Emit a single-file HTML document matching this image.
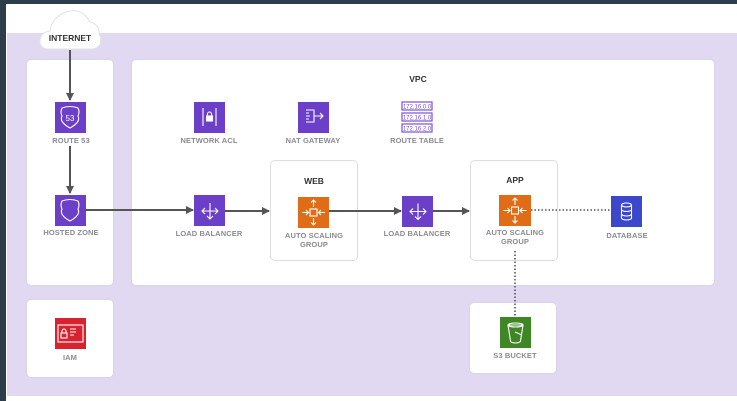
<!DOCTYPE html>
<html><head><meta charset="utf-8">
<style>
html,body{margin:0;padding:0;}
body{width:737px;height:401px;position:relative;overflow:hidden;background:#fff;font-family:"Liberation Sans",Arial,sans-serif;}
.abs{position:absolute;}
.panel{position:absolute;background:#fff;border-radius:4px;box-shadow:0 0 2px rgba(0,0,0,0.08);}
.lbl{position:absolute;font-size:7.5px;color:#8a8a92;font-weight:bold;text-align:center;width:120px;margin-left:-60px;letter-spacing:0.1px;line-height:9px;}
.ttl{position:absolute;font-size:8.5px;color:#333;font-weight:bold;text-align:center;width:80px;margin-left:-40px;}
</style></head><body>
<div class="abs" style="left:0;top:0;width:737px;height:4px;background:#2d3e4a"></div>
<div class="abs" style="left:0;top:0;width:6px;height:401px;background:#2d3e4a"></div>
<div class="abs" style="left:7px;top:33px;width:730px;height:363px;background:#e0d9f1"></div>
<div class="panel" style="left:27px;top:60px;width:86px;height:225px"></div>
<div class="panel" style="left:132px;top:60px;width:582px;height:225px"></div>
<div class="panel" style="left:27px;top:300px;width:86px;height:77px"></div>
<div class="panel" style="left:470px;top:303px;width:86px;height:70px"></div>
<div class="abs" style="left:270px;top:160px;width:86px;height:99px;border:1.5px solid #ddd;border-radius:5px;background:#fff"></div>
<div class="abs" style="left:470px;top:160px;width:86px;height:99px;border:1.5px solid #ddd;border-radius:5px;background:#fff"></div>

<svg class="abs" style="left:0;top:0" width="737" height="401" viewBox="0 0 737 401">
<defs><marker id="ah" markerWidth="8" markerHeight="8" refX="7" refY="4" orient="auto" markerUnits="userSpaceOnUse"><path d="M0,0 L8,4 L0,8z" fill="#555"/></marker></defs>
<path d="M49,49 Q39,49 40,40 Q41,32 50,31 Q52,17 66,12 Q82,7 90,22 Q100,25 99,34 Q102,38 100,44 Q98,49 90,49 Z" fill="#fff" stroke="#e3e3e3" stroke-width="1"/>
<g stroke="#555" stroke-width="2" fill="none">
<line x1="70" y1="50" x2="70" y2="100" marker-end="url(#ah)"/>
<line x1="70" y1="146" x2="70" y2="193" marker-end="url(#ah)"/>
<line x1="86" y1="210" x2="193" y2="210" marker-end="url(#ah)"/>
<line x1="225" y1="211" x2="269" y2="211" marker-end="url(#ah)"/>
<line x1="329" y1="211" x2="401" y2="211" marker-end="url(#ah)"/>
<line x1="432" y1="211" x2="469" y2="211" marker-end="url(#ah)"/>
</g>
<g stroke="#555" stroke-width="1.6" stroke-dasharray="1.5,2" fill="none">
<line x1="531" y1="210" x2="611" y2="210"/>
<line x1="515" y1="251" x2="515" y2="318"/>
</g>
<g fill="#6b3fc7">
<rect x="55" y="102" width="31" height="31"/>
<rect x="55" y="195" width="31" height="31"/>
<rect x="194" y="102" width="31" height="31"/>
<rect x="298" y="102" width="31" height="31"/>
<rect x="194" y="195" width="31" height="31"/>
<rect x="402" y="196" width="31" height="31"/>
</g>
<rect x="611" y="196" width="31" height="31" fill="#3b48cc"/>
<rect x="298" y="197" width="31" height="31" fill="#e06c17"/>
<rect x="499" y="195" width="32" height="31" fill="#e06c17"/>
<rect x="55" y="318" width="31" height="31" fill="#d6232f"/>
<rect x="500" y="317" width="31" height="31" fill="#3f8624"/>
<g stroke="#fff" stroke-width="1.1" fill="none">
<path d="M62,108 Q70,105 78,108 Q80,112 78,116 Q81,122 70,128 Q59,122 62,116 Q60,112 62,108Z"/>
<path d="M62,201 Q70,198 78,201 Q80,205 78,209 Q81,215 70,221 Q59,215 62,209 Q60,205 62,201Z"/>
<line x1="203" y1="108" x2="203" y2="126"/><line x1="216" y1="108" x2="216" y2="126"/>
<rect x="206.5" y="116" width="6" height="5" fill="#fff"/><path d="M207.5,116 v-2 a2,2 0 0 1 4,0 v2"/>
<path d="M306,110 h8 v12 h-8 M314,116 h9 M320,113 l3,3 -3,3 M306,116 h4 M306,113 h3 M306,119 h3"/>
<path d="M202,211 h16 M210,203 v16 M205,208 l-3,3 3,3 M215,208 l3,3 -3,3 M207,216 l3,3 3,-3"/>
<path d="M410,211.5 h16 M418,203.5 v16 M413,208.5 l-3,3 3,3 M423,208.5 l3,3 -3,3 M415,216.5 l3,3 3,-3"/>
<rect x="310" y="209" width="7" height="7"/><path d="M313.5,200 v7 M311,202.5 l2.5,-2.5 2.5,2.5 M313.5,218 v7 M311,222.5 l2.5,2.5 2.5,-2.5 M302,212.5 h6 M306,210 l2.5,2.5 -2.5,2.5 M325,212.5 h-6 M321,210 l-2.5,2.5 2.5,2.5"/>
<rect x="511.5" y="207" width="7" height="7"/><path d="M515,198 v7 M512.5,200.5 l2.5,-2.5 2.5,2.5 M515,216 v7 M512.5,220.5 l2.5,2.5 2.5,-2.5 M503.5,210.5 h6 M507.5,208 l2.5,2.5 -2.5,2.5 M526.5,210.5 h-6 M522.5,208 l-2.5,2.5 2.5,2.5"/>
<ellipse cx="626.5" cy="205" rx="5" ry="2"/><path d="M621.5,205 v13 a5,2 0 0 0 10,0 v-13 M621.5,209.5 a5,2 0 0 0 10,0 M621.5,214 a5,2 0 0 0 10,0"/>
<rect x="58" y="325" width="25" height="17"/><rect x="61" y="333" width="6" height="5"/><path d="M62,333 v-2 a2,2 0 0 1 4,0 v2 M70,329 h6 M70,332 h6 M70,335 h4"/>
<path d="M508,325 h15 l-2.5,16 a5,2 0 0 1 -10,0 Z"/><ellipse cx="515.5" cy="325" rx="7.5" ry="2"/><path d="M515,332 l7,3"/>
</g>
<g fill="#fff" stroke="#7c4fd6" stroke-width="1.2">
<rect x="402" y="102" width="30" height="8"/><rect x="402" y="113" width="30" height="8"/><rect x="402" y="124" width="30" height="8"/>
</g>
<g font-family="Liberation Sans,sans-serif" font-size="6" fill="#7c4fd6" text-anchor="middle">
<text x="417" y="108.5">172.16.0.0</text><text x="417" y="119.5">172.16.1.0</text><text x="417" y="130.5">172.16.2.0</text>
</g>
<text x="70" y="121" font-size="8" fill="#fff" text-anchor="middle" font-family="Liberation Sans,sans-serif">53</text>
</svg>

<div class="ttl" style="left:70px;top:33px">INTERNET</div>
<div class="ttl" style="left:418px;top:74px">VPC</div>
<div class="ttl" style="left:314px;top:176px">WEB</div>
<div class="ttl" style="left:515px;top:175px">APP</div>
<div class="lbl" style="left:71px;top:136px">ROUTE 53</div>
<div class="lbl" style="left:71px;top:228px">HOSTED ZONE</div>
<div class="lbl" style="left:209px;top:136px">NETWORK ACL</div>
<div class="lbl" style="left:313px;top:136px">NAT GATEWAY</div>
<div class="lbl" style="left:417px;top:136px">ROUTE TABLE</div>
<div class="lbl" style="left:209px;top:229px">LOAD BALANCER</div>
<div class="lbl" style="left:417px;top:229px">LOAD BALANCER</div>
<div class="lbl" style="left:314px;top:231px">AUTO SCALING<br>GROUP</div>
<div class="lbl" style="left:515px;top:228px">AUTO SCALING<br>GROUP</div>
<div class="lbl" style="left:627px;top:231px">DATABASE</div>
<div class="lbl" style="left:70px;top:353px">IAM</div>
<div class="lbl" style="left:515px;top:351px">S3 BUCKET</div>
</body></html>
